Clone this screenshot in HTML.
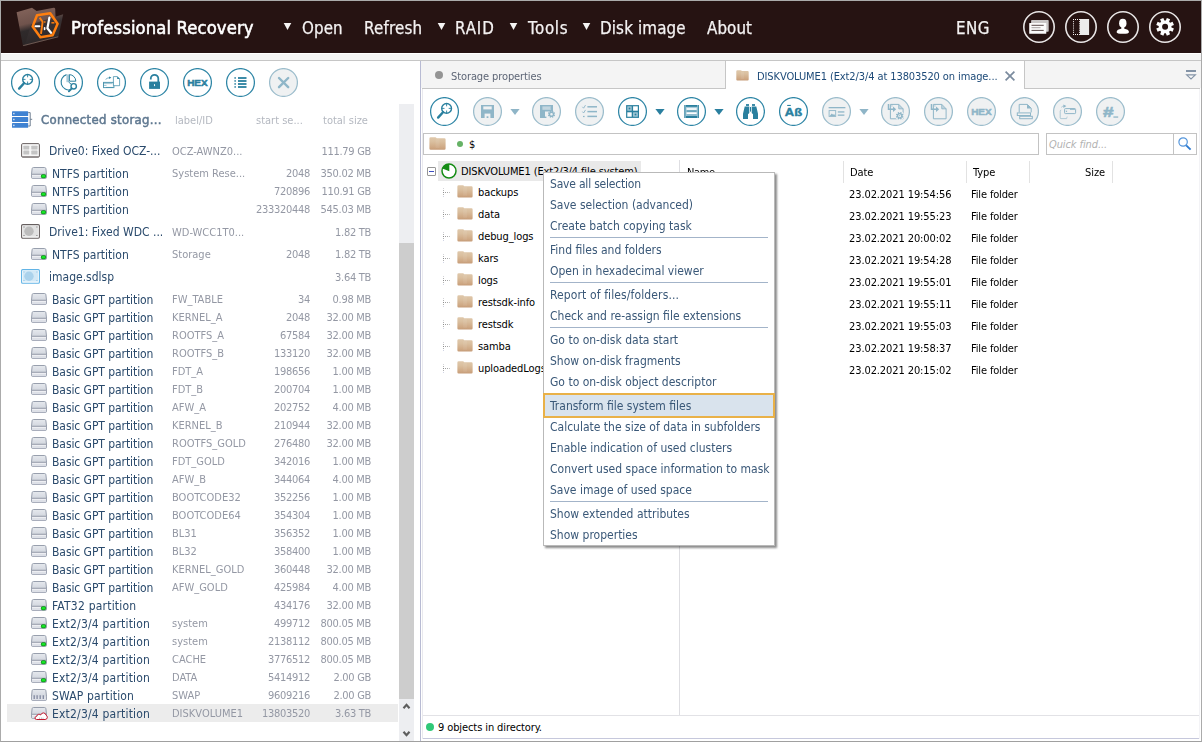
<!DOCTYPE html><html><head><meta charset="utf-8"><title>Professional Recovery</title><style>
*{box-sizing:border-box;margin:0;padding:0}
html,body{width:1202px;height:742px;overflow:hidden;background:#fff}
body{font-family:"DejaVu Sans Condensed", "Liberation Sans", sans-serif;font-size:12px;color:#000;position:relative}
.a{position:absolute;white-space:nowrap}
.row,.fl,.m,.gs{will-change:transform}
#hdr{left:1px;top:1px;width:1200px;height:52px;background:#261312}
.mi{will-change:transform;position:absolute;top:13.7px;height:26px;line-height:26px;font-size:16.8px;color:#f4f2f2;white-space:nowrap;-webkit-text-stroke:0.25px #f4f2f2;letter-spacing:0.1px}
.tri{position:absolute;top:22px;width:0;height:0;border-left:3.8px solid transparent;border-right:3.8px solid transparent;border-top:7.2px solid #f4f2f2}
.dd{position:absolute;width:0;height:0;border-left:4.5px solid transparent;border-right:4.5px solid transparent;border-top:5px solid #2f86a6}
.dd.d{border-top-color:#9fc0d0}
.row{position:absolute;left:0;width:399px;height:18px;line-height:18px;font-size:12px}
.row .n{position:absolute;left:52px;top:1px;color:#2a4a6c}
.row .l{position:absolute;left:172px;top:1px;font-size:11px;color:#9498a4}
.row .s{position:absolute;right:89px;top:1px;font-size:11px;color:#9498a4;text-align:right;letter-spacing:-0.3px}
.row .z{position:absolute;right:28px;top:1px;font-size:11px;color:#9498a4;text-align:right;letter-spacing:-0.3px}
.row.drv .n{left:49px;top:0}
.tr{position:absolute;left:478px;height:22px;line-height:22px;font-size:11px;color:#000;white-space:nowrap;letter-spacing:-0.1px}
.fl{position:absolute;height:22px;line-height:22px;font-size:11px;color:#000;white-space:nowrap;letter-spacing:-0.1px}
.m{position:absolute;left:6px;height:21px;line-height:21px;font-size:12px;color:#3a5878;white-space:nowrap}
.sep{position:absolute;left:6px;width:218px;height:1px;background:#a3b4c9}
.dot{position:absolute;left:443px;width:8px;height:11px}
.vdot{position:absolute;left:443px;width:1px;border-left:1px dotted #a0a0a0}
</style></head><body>
<div class="a" style="left:0;top:0;width:1202px;height:742px;border:1px solid #ababab;border-bottom-color:#a0a0a0"></div>
<div class="a" id="hdr">
<svg width="0" height="0" style="position:absolute"><defs><linearGradient id="pg" x1="0" y1="0" x2="0" y2="1"><stop offset="0" stop-color="#e6e9ee"/><stop offset="0.6" stop-color="#d3d7df"/><stop offset="1" stop-color="#d9dde4"/></linearGradient><linearGradient id="fg" x1="0" y1="0" x2="0" y2="1"><stop offset="0" stop-color="#dfc8ab"/><stop offset="0.35" stop-color="#dabf9f"/><stop offset="0.8" stop-color="#cfa985"/><stop offset="1" stop-color="#c69c78"/></linearGradient></defs></svg><svg class="a" style="left:14px;top:4px" width="52" height="46" viewBox="15 5 52 46"><defs><linearGradient id="lg1" x1="0" y1="0" x2="0.25" y2="1"><stop offset="0" stop-color="#85655c"/><stop offset="0.45" stop-color="#6f534c"/><stop offset="0.62" stop-color="#2f2a2b"/><stop offset="1" stop-color="#2b2526"/></linearGradient><linearGradient id="lg2" x1="0" y1="0" x2="0.2" y2="1"><stop offset="0" stop-color="#7a5d55"/><stop offset="0.35" stop-color="#3a3233"/><stop offset="1" stop-color="#2c2728"/></linearGradient></defs><path d="M16.6 12.2L32 7.8L36.6 11L53.6 7.8Q55 7.6 55.2 9L56.4 36L23 46.2Z" fill="url(#lg1)"/><path d="M31 24.4L63.2 14.2L58.4 37L24.6 46Z" fill="url(#lg2)"/><path d="M23.2 45.6L58.2 36.8" stroke="#7d6259" stroke-width="0.8" fill="none"/><path d="M37 15.2L50.2 13.2L57.6 23.8L52.6 35.2L40.4 37.2L32.6 26.6Z" fill="none" stroke="#ff7f0f" stroke-width="2.5" stroke-linejoin="round"/><path d="M35.4 26.2h4" stroke="#fff" stroke-width="1.9" stroke-linecap="round" fill="none"/><path d="M39.6 17.6L42.6 21.8L41 33.8" stroke="#ff7f0f" stroke-width="1.9" fill="none" stroke-linejoin="round"/><path d="M49.4 17.6L47.4 28.2L51 32.8" stroke="#fff" stroke-width="2.2" fill="none" stroke-linejoin="round" stroke-linecap="round"/><path d="M44.6 27.8v1.6" stroke="#fff" stroke-width="1.6" stroke-linecap="round" fill="none"/><path d="M51.4 22.8h3" stroke="#ff7f0f" stroke-width="1.5" fill="none"/><path d="M44.8 21.2v1.6" stroke="#ff7f0f" stroke-width="1.4" fill="none"/></svg>
<div class="a" style="left:70px;top:14px;height:26px;line-height:26px;font-size:18.3px;color:#fff;-webkit-text-stroke:0.55px #fff;letter-spacing:0.12px;will-change:transform" id="title">Professional Recovery</div>
<svg class="a" style="left:282px;top:21px" width="9" height="9" viewBox="0 0 9 9"><path d="M0.7 1L8.3 1L4.5 8.1Z" fill="#f6f4f4"/></svg>
<div class="mi" style="left:300.7px;letter-spacing:0.1px">Open</div>
<div class="mi" style="left:362.6px;letter-spacing:0.2px">Refresh</div>
<svg class="a" style="left:436px;top:21px" width="9" height="9" viewBox="0 0 9 9"><path d="M0.7 1L8.3 1L4.5 8.1Z" fill="#f6f4f4"/></svg>
<div class="mi" style="left:454.4px;letter-spacing:0.85px">RAID</div>
<svg class="a" style="left:508px;top:21px" width="9" height="9" viewBox="0 0 9 9"><path d="M0.7 1L8.3 1L4.5 8.1Z" fill="#f6f4f4"/></svg>
<div class="mi" style="left:526.5px;letter-spacing:0.65px">Tools</div>
<svg class="a" style="left:581px;top:21px" width="9" height="9" viewBox="0 0 9 9"><path d="M0.7 1L8.3 1L4.5 8.1Z" fill="#f6f4f4"/></svg>
<div class="mi" style="left:599px;letter-spacing:0.15px">Disk image</div>
<div class="mi" style="left:705.6px;letter-spacing:0.1px">About</div>
<div class="mi" style="left:955.3px;letter-spacing:0.5px">ENG</div>
<div class="a" style="left:1022px;top:10px;width:32px;height:32px"><svg viewBox="0 0 32 32" width="32" height="32" style="display:block"><circle cx="16" cy="16" r="15.2" fill="none" stroke="#e9e6e6" stroke-width="1.6"/><rect x="8.1" y="9" width="17.6" height="11.8" rx="0.8" fill="#c9c6c6"/><rect x="6.2" y="12" width="17.1" height="10.8" rx="0.6" fill="#fbfbfb"/><rect x="8.5" y="13.8" width="12.2" height="1" fill="#5a4a4a"/><rect x="8.5" y="16.2" width="9" height="1" fill="#a9a3a3"/><rect x="8.5" y="18.9" width="12.2" height="1" fill="#5a4a4a"/></svg></div>
<div class="a" style="left:1064px;top:10px;width:32px;height:32px"><svg viewBox="0 0 32 32" width="32" height="32" style="display:block"><circle cx="16" cy="16" r="15.2" fill="none" stroke="#e9e6e6" stroke-width="1.6"/><rect x="8" y="8" width="1" height="1" fill="#f6f4f4"/><rect x="10" y="8" width="1" height="1" fill="#f6f4f4"/><rect x="12" y="8" width="1" height="1" fill="#f6f4f4"/><rect x="14" y="8" width="1" height="1" fill="#f6f4f4"/><rect x="8" y="23" width="1" height="1" fill="#f6f4f4"/><rect x="10" y="23" width="1" height="1" fill="#f6f4f4"/><rect x="12" y="23" width="1" height="1" fill="#f6f4f4"/><rect x="14" y="23" width="1" height="1" fill="#f6f4f4"/><rect x="8" y="10.14" width="1" height="1" fill="#f6f4f4"/><rect x="8" y="12.280000000000001" width="1" height="1" fill="#f6f4f4"/><rect x="8" y="14.42" width="1" height="1" fill="#f6f4f4"/><rect x="8" y="16.560000000000002" width="1" height="1" fill="#f6f4f4"/><rect x="8" y="18.700000000000003" width="1" height="1" fill="#f6f4f4"/><rect x="8" y="20.84" width="1" height="1" fill="#f6f4f4"/><rect x="14" y="10.14" width="1" height="1" fill="#f6f4f4"/><rect x="14" y="12.280000000000001" width="1" height="1" fill="#f6f4f4"/><rect x="14" y="14.42" width="1" height="1" fill="#f6f4f4"/><rect x="14" y="16.560000000000002" width="1" height="1" fill="#f6f4f4"/><rect x="14" y="18.700000000000003" width="1" height="1" fill="#f6f4f4"/><rect x="14" y="20.84" width="1" height="1" fill="#f6f4f4"/><rect x="15" y="8" width="9.1" height="16" fill="#ececec"/></svg></div>
<div class="a" style="left:1106px;top:10px;width:32px;height:32px"><svg viewBox="0 0 32 32" width="32" height="32" style="display:block"><circle cx="16" cy="16" r="15.2" fill="none" stroke="#e9e6e6" stroke-width="1.6"/><ellipse cx="15.8" cy="12.2" rx="3.7" ry="4.4" fill="#fff"/><path d="M14.3 15.5h3v2.2q4.3 0.6 4.7 3.2 0.1 1.9-6.2 1.9-6.3 0-6.2-1.9 0.4-2.6 4.7-3.2z" fill="#fff"/></svg></div>
<div class="a" style="left:1148px;top:10px;width:32px;height:32px"><svg viewBox="0 0 32 32" width="32" height="32" style="display:block"><circle cx="16" cy="16" r="15.2" fill="none" stroke="#e9e6e6" stroke-width="1.6"/><path d="M24.93 17.56 L23.58 20.80 L21.13 19.76 L20.06 20.83 L21.10 23.28 L17.86 24.63 L16.85 22.16 L15.35 22.16 L14.34 24.63 L11.10 23.28 L12.14 20.83 L11.07 19.76 L8.62 20.80 L7.27 17.56 L9.74 16.55 L9.74 15.05 L7.27 14.04 L8.62 10.80 L11.07 11.84 L12.14 10.77 L11.10 8.32 L14.34 6.97 L15.35 9.44 L16.85 9.44 L17.86 6.97 L21.10 8.32 L20.06 10.77 L21.13 11.84 L23.58 10.80 L24.93 14.04 L22.46 15.05 L22.46 16.55Z M19.10 15.80 A3 3 0 1 0 13.10 15.80 A3 3 0 1 0 19.10 15.80Z" fill="#fff" fill-rule="evenodd"/></svg></div>
</div>
<div class="a" style="left:1px;top:54px;width:1200px;height:6px;background:#f4f4f4"></div>
<div class="a" style="left:1px;top:60px;width:1200px;height:1px;background:#c6c6c6"></div>
<div class="a" style="left:11.0px;top:68px;width:29px;height:29px"><svg viewBox="0 0 29 29" width="29" height="29" style="display:block"><circle cx="14.5" cy="14.5" r="13.9" fill="#fff" stroke="#2f86a6" stroke-width="1.25"/><circle cx="16.6" cy="11.4" r="4.9" fill="none" stroke="#2a809f" stroke-width="1.4"/><path d="M16.6 6.6v2.7M16.6 13.5v2.7M11.8 11.4h2.7M18.7 11.4h2.7" stroke="#2a809f" stroke-width="0.9" fill="none"/><path d="M13 15.2L8.1 20.6" stroke="#2a809f" stroke-width="2.4" stroke-linecap="round" fill="none"/></svg></div>
<div class="a" style="left:54.0px;top:68px;width:29px;height:29px"><svg viewBox="0 0 29 29" width="29" height="29" style="display:block"><circle cx="14.5" cy="14.5" r="13.9" fill="#fff" stroke="#2f86a6" stroke-width="1.25"/><path d="M12.6 6.6A7.8 7.8 0 1 0 17.2 21.6" fill="none" stroke="#2a809f" stroke-width="1.1"/><rect x="12.4" y="6.4" width="2.6" height="7.8" fill="#a9cbd9"/><path d="M15.4 6.6A6.6 6.6 0 0 1 21.8 13.2L15.4 13.2Z" fill="none" stroke="#2a809f" stroke-width="1"/><path d="M14.6 14L17.6 16.6" stroke="#2a809f" stroke-width="1" fill="none"/><circle cx="19.7" cy="18.3" r="2.7" fill="#fff" stroke="#2a809f" stroke-width="1.4"/><path d="M17.7 20.4L14.9 23.3" stroke="#2a809f" stroke-width="1.9" stroke-linecap="round" fill="none"/></svg></div>
<div class="a" style="left:97.0px;top:68px;width:29px;height:29px"><svg viewBox="0 0 29 29" width="29" height="29" style="display:block"><circle cx="14.5" cy="14.5" r="13.9" fill="#fff" stroke="#2f86a6" stroke-width="1.25"/><rect x="6.5" y="14.4" width="10.4" height="5.2" fill="#fff" stroke="#2a809f" stroke-width="1" stroke-opacity="0.8"/><path d="M6.5 15.6h9M6.5 17.4h3M9 19.4h7" stroke="#2a809f" stroke-width="1" stroke-opacity="0.45" fill="none"/><path d="M16.4 8.6h4l2.2 2.2v6.9h-6.2z" fill="#fff" stroke="#2a809f" stroke-width="0.9" stroke-opacity="0.75"/><path d="M20.2 8.4l2.6 2.6h-2.6z" fill="#2a809f"/><path d="M8.6 11.4Q10.2 9.9 12.4 9.7" stroke="#2a809f" stroke-width="0.9" stroke-opacity="0.7" fill="none"/><path d="M12 8.4l2.4 1.2-2.2 1.4z" fill="#2a809f"/></svg></div>
<div class="a" style="left:140.0px;top:68px;width:29px;height:29px"><svg viewBox="0 0 29 29" width="29" height="29" style="display:block"><circle cx="14.5" cy="14.5" r="13.9" fill="#fff" stroke="#2f86a6" stroke-width="1.25"/><rect x="9.1" y="13.6" width="10.9" height="7.3" fill="#2a809f"/><path d="M10.8 11.6V10.6A3.75 3.75 0 0 1 18.3 10.6V14" fill="none" stroke="#2a809f" stroke-width="1.75"/><ellipse cx="14.55" cy="17.1" rx="0.55" ry="1.2" fill="#fff"/></svg></div>
<div class="a" style="left:183.0px;top:68px;width:29px;height:29px"><svg viewBox="0 0 29 29" width="29" height="29" style="display:block"><circle cx="14.5" cy="14.5" r="13.9" fill="#fff" stroke="#2f86a6" stroke-width="1.25"/><text x="14.45" y="18" text-anchor="middle" font-family="'Liberation Sans','DejaVu Sans',sans-serif" font-weight="bold" font-size="9.8" textLength="20.6" lengthAdjust="spacingAndGlyphs" fill="#2a809f" stroke="#2a809f" stroke-width="0.5">HEX</text></svg></div>
<div class="a" style="left:226.0px;top:68px;width:29px;height:29px"><svg viewBox="0 0 29 29" width="29" height="29" style="display:block"><circle cx="14.5" cy="14.5" r="13.9" fill="#fff" stroke="#2f86a6" stroke-width="1.25"/><rect x="8.3" y="9.1" width="1.7" height="1.7" fill="#2a809f" fill-opacity="0.8"/><rect x="12" y="9.1" width="8.5" height="1.8" fill="#2a809f"/><rect x="8.3" y="12.1" width="1.7" height="1.7" fill="#2a809f" fill-opacity="0.8"/><rect x="12" y="12.1" width="8.5" height="1.8" fill="#2a809f"/><rect x="8.3" y="15.1" width="1.7" height="1.7" fill="#2a809f" fill-opacity="0.8"/><rect x="12" y="15.1" width="8.5" height="1.8" fill="#2a809f"/><rect x="8.3" y="18.1" width="1.7" height="1.7" fill="#2a809f" fill-opacity="0.8"/><rect x="12" y="18.1" width="8.5" height="1.8" fill="#2a809f"/></svg></div>
<div class="a" style="left:269.0px;top:68px;width:29px;height:29px"><svg viewBox="0 0 29 29" width="29" height="29" style="display:block"><circle cx="14.5" cy="14.5" r="13.9" fill="#eff1f2" stroke="#9cbdcc" stroke-width="1.25"/><path d="M10 10L19.2 19.2M19.2 10L10 19.2" stroke="#8fb6c8" stroke-width="2.4" stroke-linecap="round" fill="none"/></svg></div>
<svg class="a" style="left:12px;top:111px" width="21" height="17" viewBox="0 0 21 17"><rect x="0" y="0.2" width="16.2" height="4.8" rx="0.6" fill="#3f82d2"/><rect x="1.2" y="1.9" width="1.3" height="1.4" fill="#e8f0fa"/><rect x="0" y="6.1" width="16.2" height="4.8" rx="0.6" fill="#3f82d2"/><rect x="1.2" y="7.8" width="1.3" height="1.4" fill="#e8f0fa"/><rect x="0" y="12" width="16.2" height="4.8" rx="0.6" fill="#3f82d2"/><rect x="1.2" y="13.7" width="1.3" height="1.4" fill="#e8f0fa"/><path d="M16.2 1.6h2v13.4h-2M18.2 8.3h2" stroke="#6f7f92" stroke-width="1" fill="none"/></svg>
<div class="a gs" style="left:40.5px;top:111px;height:18px;line-height:18px;font-size:13px;color:#5f7890;-webkit-text-stroke:0.5px #5f7890;letter-spacing:0.3px">Connected storag...</div>
<div class="a gs" style="left:175px;top:112px;height:18px;line-height:18px;font-size:11px;color:#b4b8c0">label/ID</div>
<div class="a gs" style="left:256px;top:112px;height:18px;line-height:18px;font-size:11px;color:#b4b8c0">start se...</div>
<div class="a gs" style="left:323px;top:112px;height:18px;line-height:18px;font-size:11px;color:#b4b8c0">total size</div>
<div class="a" style="left:7px;top:704px;width:391px;height:18px;background:#ececec"></div>
<div class="row drv" style="top:142px"><svg class="a" style="left:21px;top:1px" width="19" height="15" viewBox="0 0 19 15"><rect x="0.6" y="0.6" width="17.8" height="13.6" rx="1.2" fill="#f6f6f6" stroke="#6a6363" stroke-width="1"/><rect x="2.4" y="2.7" width="5.8" height="3.9" rx="0.6" fill="#c4c4c4"/><rect x="10.3" y="2.7" width="6.2" height="3.9" rx="0.6" fill="#c4c4c4"/><rect x="2.4" y="7.6" width="5.8" height="3.9" rx="0.6" fill="#c4c4c4"/><rect x="10.3" y="7.6" width="6.2" height="3.9" rx="0.6" fill="#c4c4c4"/><rect x="1" y="13.2" width="17" height="1" fill="#8c8686"/></svg><span class="n">Drive0: Fixed OCZ-...</span><span class="l">OCZ-AWNZ0...</span><span class="s"></span><span class="z">111.79 GB</span></div>
<div class="row" style="top:164px"><svg class="a" style="left:31px;top:3px;overflow:visible" width="16" height="12" viewBox="0 0 16 12"><path d="M2.5 0.5h11q1.2 0 1.4 1.2l0.6 5.5v3q0 1.3-1.3 1.3h-12.4q-1.3 0-1.3-1.3v-3l0.6-5.5q0.2-1.2 1.4-1.2z" fill="url(#pg)" stroke="#8d95a5" stroke-width="0.9"/><path d="M0.9 7.7h14.2v2.5q0 1-1 1h-12.2q-1 0-1-1z" fill="#dde0e7"/><path d="M0.8 7.3h14.4" stroke="#7f8797" stroke-width="0.9" fill="none"/><path d="M1 8.3h14" stroke="#f7f8fa" stroke-width="0.8" fill="none"/><rect x="9.9" y="7.2" width="5.2" height="4" rx="1.7" fill="#0a8c16"/><rect x="10.6" y="7.9" width="3.8" height="2.6" rx="1.3" fill="#16e626"/></svg><span class="n">NTFS partition</span><span class="l">System Rese...</span><span class="s">2048</span><span class="z">350.02 MB</span></div>
<div class="row" style="top:182px"><svg class="a" style="left:31px;top:3px;overflow:visible" width="16" height="12" viewBox="0 0 16 12"><path d="M2.5 0.5h11q1.2 0 1.4 1.2l0.6 5.5v3q0 1.3-1.3 1.3h-12.4q-1.3 0-1.3-1.3v-3l0.6-5.5q0.2-1.2 1.4-1.2z" fill="url(#pg)" stroke="#8d95a5" stroke-width="0.9"/><path d="M0.9 7.7h14.2v2.5q0 1-1 1h-12.2q-1 0-1-1z" fill="#dde0e7"/><path d="M0.8 7.3h14.4" stroke="#7f8797" stroke-width="0.9" fill="none"/><path d="M1 8.3h14" stroke="#f7f8fa" stroke-width="0.8" fill="none"/><rect x="9.9" y="7.2" width="5.2" height="4" rx="1.7" fill="#0a8c16"/><rect x="10.6" y="7.9" width="3.8" height="2.6" rx="1.3" fill="#16e626"/></svg><span class="n">NTFS partition</span><span class="l"></span><span class="s">720896</span><span class="z">110.91 GB</span></div>
<div class="row" style="top:200px"><svg class="a" style="left:31px;top:3px;overflow:visible" width="16" height="12" viewBox="0 0 16 12"><path d="M2.5 0.5h11q1.2 0 1.4 1.2l0.6 5.5v3q0 1.3-1.3 1.3h-12.4q-1.3 0-1.3-1.3v-3l0.6-5.5q0.2-1.2 1.4-1.2z" fill="url(#pg)" stroke="#8d95a5" stroke-width="0.9"/><path d="M0.9 7.7h14.2v2.5q0 1-1 1h-12.2q-1 0-1-1z" fill="#dde0e7"/><path d="M0.8 7.3h14.4" stroke="#7f8797" stroke-width="0.9" fill="none"/><path d="M1 8.3h14" stroke="#f7f8fa" stroke-width="0.8" fill="none"/><rect x="9.9" y="7.2" width="5.2" height="4" rx="1.7" fill="#0a8c16"/><rect x="10.6" y="7.9" width="3.8" height="2.6" rx="1.3" fill="#16e626"/></svg><span class="n">NTFS partition</span><span class="l"></span><span class="s">233320448</span><span class="z">545.03 MB</span></div>
<div class="row drv" style="top:223px"><svg class="a" style="left:21px;top:1px" width="19" height="15" viewBox="0 0 19 15"><rect x="0.6" y="0.6" width="17.8" height="13.6" rx="1.2" fill="#fff" stroke="#665f5f" stroke-width="1.1"/><rect x="2" y="2" width="15" height="10.6" fill="#e1e1e1"/><circle cx="8" cy="7.2" r="4.7" fill="#bcbcbc"/><rect x="2.5" y="2.5" width="1" height="1" fill="#777"/><rect x="15.4" y="2.5" width="1" height="1" fill="#777"/><rect x="2.5" y="11" width="1" height="1" fill="#777"/><rect x="15.4" y="11" width="1" height="1" fill="#777"/></svg><span class="n">Drive1: Fixed WDC ...</span><span class="l">WD-WCC1T0...</span><span class="s"></span><span class="z">1.82 TB</span></div>
<div class="row" style="top:245px"><svg class="a" style="left:31px;top:3px;overflow:visible" width="16" height="12" viewBox="0 0 16 12"><path d="M2.5 0.5h11q1.2 0 1.4 1.2l0.6 5.5v3q0 1.3-1.3 1.3h-12.4q-1.3 0-1.3-1.3v-3l0.6-5.5q0.2-1.2 1.4-1.2z" fill="url(#pg)" stroke="#8d95a5" stroke-width="0.9"/><path d="M0.9 7.7h14.2v2.5q0 1-1 1h-12.2q-1 0-1-1z" fill="#dde0e7"/><path d="M0.8 7.3h14.4" stroke="#7f8797" stroke-width="0.9" fill="none"/><path d="M1 8.3h14" stroke="#f7f8fa" stroke-width="0.8" fill="none"/><rect x="9.9" y="7.2" width="5.2" height="4" rx="1.7" fill="#0a8c16"/><rect x="10.6" y="7.9" width="3.8" height="2.6" rx="1.3" fill="#16e626"/></svg><span class="n">NTFS partition</span><span class="l">Storage</span><span class="s">2048</span><span class="z">1.82 TB</span></div>
<div class="row drv" style="top:268px"><svg class="a" style="left:21px;top:0.6px" width="19" height="15" viewBox="0 0 19 15"><rect x="0.6" y="0.6" width="17.8" height="13.6" rx="1" fill="#fff" stroke="#62b4e6" stroke-width="1.1"/><rect x="2" y="2" width="15" height="10.6" fill="#d2e8f6"/><circle cx="8" cy="7.2" r="4.7" fill="#aad2ec"/><rect x="2.5" y="2.5" width="1" height="1" fill="#8cc4e8"/><rect x="15.4" y="2.5" width="1" height="1" fill="#8cc4e8"/><rect x="2.5" y="11" width="1" height="1" fill="#8cc4e8"/><rect x="15.4" y="11" width="1" height="1" fill="#8cc4e8"/></svg><span class="n">image.sdlsp</span><span class="l"></span><span class="s"></span><span class="z">3.64 TB</span></div>
<div class="row" style="top:290px"><svg class="a" style="left:31px;top:3px;overflow:visible" width="16" height="12" viewBox="0 0 16 12"><path d="M2.5 0.5h11q1.2 0 1.4 1.2l0.6 5.5v3q0 1.3-1.3 1.3h-12.4q-1.3 0-1.3-1.3v-3l0.6-5.5q0.2-1.2 1.4-1.2z" fill="url(#pg)" stroke="#8d95a5" stroke-width="0.9"/><path d="M0.9 7.7h14.2v2.5q0 1-1 1h-12.2q-1 0-1-1z" fill="#dde0e7"/><path d="M0.8 7.3h14.4" stroke="#7f8797" stroke-width="0.9" fill="none"/><path d="M1 8.3h14" stroke="#f7f8fa" stroke-width="0.8" fill="none"/></svg><span class="n" style="letter-spacing:-0.07px">Basic GPT partition</span><span class="l">FW_TABLE</span><span class="s">34</span><span class="z">0.98 MB</span></div>
<div class="row" style="top:308px"><svg class="a" style="left:31px;top:3px;overflow:visible" width="16" height="12" viewBox="0 0 16 12"><path d="M2.5 0.5h11q1.2 0 1.4 1.2l0.6 5.5v3q0 1.3-1.3 1.3h-12.4q-1.3 0-1.3-1.3v-3l0.6-5.5q0.2-1.2 1.4-1.2z" fill="url(#pg)" stroke="#8d95a5" stroke-width="0.9"/><path d="M0.9 7.7h14.2v2.5q0 1-1 1h-12.2q-1 0-1-1z" fill="#dde0e7"/><path d="M0.8 7.3h14.4" stroke="#7f8797" stroke-width="0.9" fill="none"/><path d="M1 8.3h14" stroke="#f7f8fa" stroke-width="0.8" fill="none"/></svg><span class="n" style="letter-spacing:-0.07px">Basic GPT partition</span><span class="l">KERNEL_A</span><span class="s">2048</span><span class="z">32.00 MB</span></div>
<div class="row" style="top:326px"><svg class="a" style="left:31px;top:3px;overflow:visible" width="16" height="12" viewBox="0 0 16 12"><path d="M2.5 0.5h11q1.2 0 1.4 1.2l0.6 5.5v3q0 1.3-1.3 1.3h-12.4q-1.3 0-1.3-1.3v-3l0.6-5.5q0.2-1.2 1.4-1.2z" fill="url(#pg)" stroke="#8d95a5" stroke-width="0.9"/><path d="M0.9 7.7h14.2v2.5q0 1-1 1h-12.2q-1 0-1-1z" fill="#dde0e7"/><path d="M0.8 7.3h14.4" stroke="#7f8797" stroke-width="0.9" fill="none"/><path d="M1 8.3h14" stroke="#f7f8fa" stroke-width="0.8" fill="none"/></svg><span class="n" style="letter-spacing:-0.07px">Basic GPT partition</span><span class="l">ROOTFS_A</span><span class="s">67584</span><span class="z">32.00 MB</span></div>
<div class="row" style="top:344px"><svg class="a" style="left:31px;top:3px;overflow:visible" width="16" height="12" viewBox="0 0 16 12"><path d="M2.5 0.5h11q1.2 0 1.4 1.2l0.6 5.5v3q0 1.3-1.3 1.3h-12.4q-1.3 0-1.3-1.3v-3l0.6-5.5q0.2-1.2 1.4-1.2z" fill="url(#pg)" stroke="#8d95a5" stroke-width="0.9"/><path d="M0.9 7.7h14.2v2.5q0 1-1 1h-12.2q-1 0-1-1z" fill="#dde0e7"/><path d="M0.8 7.3h14.4" stroke="#7f8797" stroke-width="0.9" fill="none"/><path d="M1 8.3h14" stroke="#f7f8fa" stroke-width="0.8" fill="none"/></svg><span class="n" style="letter-spacing:-0.07px">Basic GPT partition</span><span class="l">ROOTFS_B</span><span class="s">133120</span><span class="z">32.00 MB</span></div>
<div class="row" style="top:362px"><svg class="a" style="left:31px;top:3px;overflow:visible" width="16" height="12" viewBox="0 0 16 12"><path d="M2.5 0.5h11q1.2 0 1.4 1.2l0.6 5.5v3q0 1.3-1.3 1.3h-12.4q-1.3 0-1.3-1.3v-3l0.6-5.5q0.2-1.2 1.4-1.2z" fill="url(#pg)" stroke="#8d95a5" stroke-width="0.9"/><path d="M0.9 7.7h14.2v2.5q0 1-1 1h-12.2q-1 0-1-1z" fill="#dde0e7"/><path d="M0.8 7.3h14.4" stroke="#7f8797" stroke-width="0.9" fill="none"/><path d="M1 8.3h14" stroke="#f7f8fa" stroke-width="0.8" fill="none"/></svg><span class="n" style="letter-spacing:-0.07px">Basic GPT partition</span><span class="l">FDT_A</span><span class="s">198656</span><span class="z">1.00 MB</span></div>
<div class="row" style="top:380px"><svg class="a" style="left:31px;top:3px;overflow:visible" width="16" height="12" viewBox="0 0 16 12"><path d="M2.5 0.5h11q1.2 0 1.4 1.2l0.6 5.5v3q0 1.3-1.3 1.3h-12.4q-1.3 0-1.3-1.3v-3l0.6-5.5q0.2-1.2 1.4-1.2z" fill="url(#pg)" stroke="#8d95a5" stroke-width="0.9"/><path d="M0.9 7.7h14.2v2.5q0 1-1 1h-12.2q-1 0-1-1z" fill="#dde0e7"/><path d="M0.8 7.3h14.4" stroke="#7f8797" stroke-width="0.9" fill="none"/><path d="M1 8.3h14" stroke="#f7f8fa" stroke-width="0.8" fill="none"/></svg><span class="n" style="letter-spacing:-0.07px">Basic GPT partition</span><span class="l">FDT_B</span><span class="s">200704</span><span class="z">1.00 MB</span></div>
<div class="row" style="top:398px"><svg class="a" style="left:31px;top:3px;overflow:visible" width="16" height="12" viewBox="0 0 16 12"><path d="M2.5 0.5h11q1.2 0 1.4 1.2l0.6 5.5v3q0 1.3-1.3 1.3h-12.4q-1.3 0-1.3-1.3v-3l0.6-5.5q0.2-1.2 1.4-1.2z" fill="url(#pg)" stroke="#8d95a5" stroke-width="0.9"/><path d="M0.9 7.7h14.2v2.5q0 1-1 1h-12.2q-1 0-1-1z" fill="#dde0e7"/><path d="M0.8 7.3h14.4" stroke="#7f8797" stroke-width="0.9" fill="none"/><path d="M1 8.3h14" stroke="#f7f8fa" stroke-width="0.8" fill="none"/></svg><span class="n" style="letter-spacing:-0.07px">Basic GPT partition</span><span class="l">AFW_A</span><span class="s">202752</span><span class="z">4.00 MB</span></div>
<div class="row" style="top:416px"><svg class="a" style="left:31px;top:3px;overflow:visible" width="16" height="12" viewBox="0 0 16 12"><path d="M2.5 0.5h11q1.2 0 1.4 1.2l0.6 5.5v3q0 1.3-1.3 1.3h-12.4q-1.3 0-1.3-1.3v-3l0.6-5.5q0.2-1.2 1.4-1.2z" fill="url(#pg)" stroke="#8d95a5" stroke-width="0.9"/><path d="M0.9 7.7h14.2v2.5q0 1-1 1h-12.2q-1 0-1-1z" fill="#dde0e7"/><path d="M0.8 7.3h14.4" stroke="#7f8797" stroke-width="0.9" fill="none"/><path d="M1 8.3h14" stroke="#f7f8fa" stroke-width="0.8" fill="none"/></svg><span class="n" style="letter-spacing:-0.07px">Basic GPT partition</span><span class="l">KERNEL_B</span><span class="s">210944</span><span class="z">32.00 MB</span></div>
<div class="row" style="top:434px"><svg class="a" style="left:31px;top:3px;overflow:visible" width="16" height="12" viewBox="0 0 16 12"><path d="M2.5 0.5h11q1.2 0 1.4 1.2l0.6 5.5v3q0 1.3-1.3 1.3h-12.4q-1.3 0-1.3-1.3v-3l0.6-5.5q0.2-1.2 1.4-1.2z" fill="url(#pg)" stroke="#8d95a5" stroke-width="0.9"/><path d="M0.9 7.7h14.2v2.5q0 1-1 1h-12.2q-1 0-1-1z" fill="#dde0e7"/><path d="M0.8 7.3h14.4" stroke="#7f8797" stroke-width="0.9" fill="none"/><path d="M1 8.3h14" stroke="#f7f8fa" stroke-width="0.8" fill="none"/></svg><span class="n" style="letter-spacing:-0.07px">Basic GPT partition</span><span class="l">ROOTFS_GOLD</span><span class="s">276480</span><span class="z">32.00 MB</span></div>
<div class="row" style="top:452px"><svg class="a" style="left:31px;top:3px;overflow:visible" width="16" height="12" viewBox="0 0 16 12"><path d="M2.5 0.5h11q1.2 0 1.4 1.2l0.6 5.5v3q0 1.3-1.3 1.3h-12.4q-1.3 0-1.3-1.3v-3l0.6-5.5q0.2-1.2 1.4-1.2z" fill="url(#pg)" stroke="#8d95a5" stroke-width="0.9"/><path d="M0.9 7.7h14.2v2.5q0 1-1 1h-12.2q-1 0-1-1z" fill="#dde0e7"/><path d="M0.8 7.3h14.4" stroke="#7f8797" stroke-width="0.9" fill="none"/><path d="M1 8.3h14" stroke="#f7f8fa" stroke-width="0.8" fill="none"/></svg><span class="n" style="letter-spacing:-0.07px">Basic GPT partition</span><span class="l">FDT_GOLD</span><span class="s">342016</span><span class="z">1.00 MB</span></div>
<div class="row" style="top:470px"><svg class="a" style="left:31px;top:3px;overflow:visible" width="16" height="12" viewBox="0 0 16 12"><path d="M2.5 0.5h11q1.2 0 1.4 1.2l0.6 5.5v3q0 1.3-1.3 1.3h-12.4q-1.3 0-1.3-1.3v-3l0.6-5.5q0.2-1.2 1.4-1.2z" fill="url(#pg)" stroke="#8d95a5" stroke-width="0.9"/><path d="M0.9 7.7h14.2v2.5q0 1-1 1h-12.2q-1 0-1-1z" fill="#dde0e7"/><path d="M0.8 7.3h14.4" stroke="#7f8797" stroke-width="0.9" fill="none"/><path d="M1 8.3h14" stroke="#f7f8fa" stroke-width="0.8" fill="none"/></svg><span class="n" style="letter-spacing:-0.07px">Basic GPT partition</span><span class="l">AFW_B</span><span class="s">344064</span><span class="z">4.00 MB</span></div>
<div class="row" style="top:488px"><svg class="a" style="left:31px;top:3px;overflow:visible" width="16" height="12" viewBox="0 0 16 12"><path d="M2.5 0.5h11q1.2 0 1.4 1.2l0.6 5.5v3q0 1.3-1.3 1.3h-12.4q-1.3 0-1.3-1.3v-3l0.6-5.5q0.2-1.2 1.4-1.2z" fill="url(#pg)" stroke="#8d95a5" stroke-width="0.9"/><path d="M0.9 7.7h14.2v2.5q0 1-1 1h-12.2q-1 0-1-1z" fill="#dde0e7"/><path d="M0.8 7.3h14.4" stroke="#7f8797" stroke-width="0.9" fill="none"/><path d="M1 8.3h14" stroke="#f7f8fa" stroke-width="0.8" fill="none"/></svg><span class="n" style="letter-spacing:-0.07px">Basic GPT partition</span><span class="l">BOOTCODE32</span><span class="s">352256</span><span class="z">1.00 MB</span></div>
<div class="row" style="top:506px"><svg class="a" style="left:31px;top:3px;overflow:visible" width="16" height="12" viewBox="0 0 16 12"><path d="M2.5 0.5h11q1.2 0 1.4 1.2l0.6 5.5v3q0 1.3-1.3 1.3h-12.4q-1.3 0-1.3-1.3v-3l0.6-5.5q0.2-1.2 1.4-1.2z" fill="url(#pg)" stroke="#8d95a5" stroke-width="0.9"/><path d="M0.9 7.7h14.2v2.5q0 1-1 1h-12.2q-1 0-1-1z" fill="#dde0e7"/><path d="M0.8 7.3h14.4" stroke="#7f8797" stroke-width="0.9" fill="none"/><path d="M1 8.3h14" stroke="#f7f8fa" stroke-width="0.8" fill="none"/></svg><span class="n" style="letter-spacing:-0.07px">Basic GPT partition</span><span class="l">BOOTCODE64</span><span class="s">354304</span><span class="z">1.00 MB</span></div>
<div class="row" style="top:524px"><svg class="a" style="left:31px;top:3px;overflow:visible" width="16" height="12" viewBox="0 0 16 12"><path d="M2.5 0.5h11q1.2 0 1.4 1.2l0.6 5.5v3q0 1.3-1.3 1.3h-12.4q-1.3 0-1.3-1.3v-3l0.6-5.5q0.2-1.2 1.4-1.2z" fill="url(#pg)" stroke="#8d95a5" stroke-width="0.9"/><path d="M0.9 7.7h14.2v2.5q0 1-1 1h-12.2q-1 0-1-1z" fill="#dde0e7"/><path d="M0.8 7.3h14.4" stroke="#7f8797" stroke-width="0.9" fill="none"/><path d="M1 8.3h14" stroke="#f7f8fa" stroke-width="0.8" fill="none"/></svg><span class="n" style="letter-spacing:-0.07px">Basic GPT partition</span><span class="l">BL31</span><span class="s">356352</span><span class="z">1.00 MB</span></div>
<div class="row" style="top:542px"><svg class="a" style="left:31px;top:3px;overflow:visible" width="16" height="12" viewBox="0 0 16 12"><path d="M2.5 0.5h11q1.2 0 1.4 1.2l0.6 5.5v3q0 1.3-1.3 1.3h-12.4q-1.3 0-1.3-1.3v-3l0.6-5.5q0.2-1.2 1.4-1.2z" fill="url(#pg)" stroke="#8d95a5" stroke-width="0.9"/><path d="M0.9 7.7h14.2v2.5q0 1-1 1h-12.2q-1 0-1-1z" fill="#dde0e7"/><path d="M0.8 7.3h14.4" stroke="#7f8797" stroke-width="0.9" fill="none"/><path d="M1 8.3h14" stroke="#f7f8fa" stroke-width="0.8" fill="none"/></svg><span class="n" style="letter-spacing:-0.07px">Basic GPT partition</span><span class="l">BL32</span><span class="s">358400</span><span class="z">1.00 MB</span></div>
<div class="row" style="top:560px"><svg class="a" style="left:31px;top:3px;overflow:visible" width="16" height="12" viewBox="0 0 16 12"><path d="M2.5 0.5h11q1.2 0 1.4 1.2l0.6 5.5v3q0 1.3-1.3 1.3h-12.4q-1.3 0-1.3-1.3v-3l0.6-5.5q0.2-1.2 1.4-1.2z" fill="url(#pg)" stroke="#8d95a5" stroke-width="0.9"/><path d="M0.9 7.7h14.2v2.5q0 1-1 1h-12.2q-1 0-1-1z" fill="#dde0e7"/><path d="M0.8 7.3h14.4" stroke="#7f8797" stroke-width="0.9" fill="none"/><path d="M1 8.3h14" stroke="#f7f8fa" stroke-width="0.8" fill="none"/></svg><span class="n" style="letter-spacing:-0.07px">Basic GPT partition</span><span class="l">KERNEL_GOLD</span><span class="s">360448</span><span class="z">32.00 MB</span></div>
<div class="row" style="top:578px"><svg class="a" style="left:31px;top:3px;overflow:visible" width="16" height="12" viewBox="0 0 16 12"><path d="M2.5 0.5h11q1.2 0 1.4 1.2l0.6 5.5v3q0 1.3-1.3 1.3h-12.4q-1.3 0-1.3-1.3v-3l0.6-5.5q0.2-1.2 1.4-1.2z" fill="url(#pg)" stroke="#8d95a5" stroke-width="0.9"/><path d="M0.9 7.7h14.2v2.5q0 1-1 1h-12.2q-1 0-1-1z" fill="#dde0e7"/><path d="M0.8 7.3h14.4" stroke="#7f8797" stroke-width="0.9" fill="none"/><path d="M1 8.3h14" stroke="#f7f8fa" stroke-width="0.8" fill="none"/></svg><span class="n" style="letter-spacing:-0.07px">Basic GPT partition</span><span class="l">AFW_GOLD</span><span class="s">425984</span><span class="z">4.00 MB</span></div>
<div class="row" style="top:596px"><svg class="a" style="left:31px;top:3px;overflow:visible" width="16" height="12" viewBox="0 0 16 12"><path d="M2.5 0.5h11q1.2 0 1.4 1.2l0.6 5.5v3q0 1.3-1.3 1.3h-12.4q-1.3 0-1.3-1.3v-3l0.6-5.5q0.2-1.2 1.4-1.2z" fill="url(#pg)" stroke="#8d95a5" stroke-width="0.9"/><path d="M0.9 7.7h14.2v2.5q0 1-1 1h-12.2q-1 0-1-1z" fill="#dde0e7"/><path d="M0.8 7.3h14.4" stroke="#7f8797" stroke-width="0.9" fill="none"/><path d="M1 8.3h14" stroke="#f7f8fa" stroke-width="0.8" fill="none"/><rect x="9.9" y="7.2" width="5.2" height="4" rx="1.7" fill="#0a8c16"/><rect x="10.6" y="7.9" width="3.8" height="2.6" rx="1.3" fill="#16e626"/></svg><span class="n" style="letter-spacing:0.22px">FAT32 partition</span><span class="l"></span><span class="s">434176</span><span class="z">32.00 MB</span></div>
<div class="row" style="top:614px"><svg class="a" style="left:31px;top:3px;overflow:visible" width="16" height="12" viewBox="0 0 16 12"><path d="M2.5 0.5h11q1.2 0 1.4 1.2l0.6 5.5v3q0 1.3-1.3 1.3h-12.4q-1.3 0-1.3-1.3v-3l0.6-5.5q0.2-1.2 1.4-1.2z" fill="url(#pg)" stroke="#8d95a5" stroke-width="0.9"/><path d="M0.9 7.7h14.2v2.5q0 1-1 1h-12.2q-1 0-1-1z" fill="#dde0e7"/><path d="M0.8 7.3h14.4" stroke="#7f8797" stroke-width="0.9" fill="none"/><path d="M1 8.3h14" stroke="#f7f8fa" stroke-width="0.8" fill="none"/><rect x="9.9" y="7.2" width="5.2" height="4" rx="1.7" fill="#0a8c16"/><rect x="10.6" y="7.9" width="3.8" height="2.6" rx="1.3" fill="#16e626"/></svg><span class="n" style="letter-spacing:0.2px">Ext2/3/4 partition</span><span class="l">system</span><span class="s">499712</span><span class="z">800.05 MB</span></div>
<div class="row" style="top:632px"><svg class="a" style="left:31px;top:3px;overflow:visible" width="16" height="12" viewBox="0 0 16 12"><path d="M2.5 0.5h11q1.2 0 1.4 1.2l0.6 5.5v3q0 1.3-1.3 1.3h-12.4q-1.3 0-1.3-1.3v-3l0.6-5.5q0.2-1.2 1.4-1.2z" fill="url(#pg)" stroke="#8d95a5" stroke-width="0.9"/><path d="M0.9 7.7h14.2v2.5q0 1-1 1h-12.2q-1 0-1-1z" fill="#dde0e7"/><path d="M0.8 7.3h14.4" stroke="#7f8797" stroke-width="0.9" fill="none"/><path d="M1 8.3h14" stroke="#f7f8fa" stroke-width="0.8" fill="none"/><rect x="9.9" y="7.2" width="5.2" height="4" rx="1.7" fill="#0a8c16"/><rect x="10.6" y="7.9" width="3.8" height="2.6" rx="1.3" fill="#16e626"/></svg><span class="n" style="letter-spacing:0.2px">Ext2/3/4 partition</span><span class="l">system</span><span class="s">2138112</span><span class="z">800.05 MB</span></div>
<div class="row" style="top:650px"><svg class="a" style="left:31px;top:3px;overflow:visible" width="16" height="12" viewBox="0 0 16 12"><path d="M2.5 0.5h11q1.2 0 1.4 1.2l0.6 5.5v3q0 1.3-1.3 1.3h-12.4q-1.3 0-1.3-1.3v-3l0.6-5.5q0.2-1.2 1.4-1.2z" fill="url(#pg)" stroke="#8d95a5" stroke-width="0.9"/><path d="M0.9 7.7h14.2v2.5q0 1-1 1h-12.2q-1 0-1-1z" fill="#dde0e7"/><path d="M0.8 7.3h14.4" stroke="#7f8797" stroke-width="0.9" fill="none"/><path d="M1 8.3h14" stroke="#f7f8fa" stroke-width="0.8" fill="none"/><rect x="9.9" y="7.2" width="5.2" height="4" rx="1.7" fill="#0a8c16"/><rect x="10.6" y="7.9" width="3.8" height="2.6" rx="1.3" fill="#16e626"/></svg><span class="n" style="letter-spacing:0.2px">Ext2/3/4 partition</span><span class="l">CACHE</span><span class="s">3776512</span><span class="z">800.05 MB</span></div>
<div class="row" style="top:668px"><svg class="a" style="left:31px;top:3px;overflow:visible" width="16" height="12" viewBox="0 0 16 12"><path d="M2.5 0.5h11q1.2 0 1.4 1.2l0.6 5.5v3q0 1.3-1.3 1.3h-12.4q-1.3 0-1.3-1.3v-3l0.6-5.5q0.2-1.2 1.4-1.2z" fill="url(#pg)" stroke="#8d95a5" stroke-width="0.9"/><path d="M0.9 7.7h14.2v2.5q0 1-1 1h-12.2q-1 0-1-1z" fill="#dde0e7"/><path d="M0.8 7.3h14.4" stroke="#7f8797" stroke-width="0.9" fill="none"/><path d="M1 8.3h14" stroke="#f7f8fa" stroke-width="0.8" fill="none"/><rect x="9.9" y="7.2" width="5.2" height="4" rx="1.7" fill="#0a8c16"/><rect x="10.6" y="7.9" width="3.8" height="2.6" rx="1.3" fill="#16e626"/></svg><span class="n" style="letter-spacing:0.2px">Ext2/3/4 partition</span><span class="l">DATA</span><span class="s">5414912</span><span class="z">2.00 GB</span></div>
<div class="row" style="top:686px"><svg class="a" style="left:31px;top:3px;overflow:visible" width="16" height="12" viewBox="0 0 16 12"><path d="M2.5 0.5h11q1.2 0 1.4 1.2l0.6 5.5v3q0 1.3-1.3 1.3h-12.4q-1.3 0-1.3-1.3v-3l0.6-5.5q0.2-1.2 1.4-1.2z" fill="url(#pg)" stroke="#8d95a5" stroke-width="0.9"/><path d="M0.9 7.7h14.2v2.5q0 1-1 1h-12.2q-1 0-1-1z" fill="#dde0e7"/><path d="M3.2 6.2v3.7M6.1 6.2v3.7M9.2 6.2v3.7M12.3 6.2v3.7" stroke="#8289a0" stroke-width="1.3" fill="none"/></svg><span class="n" style="letter-spacing:0.15px">SWAP partition</span><span class="l">SWAP</span><span class="s">9609216</span><span class="z">2.00 GB</span></div>
<div class="row" style="top:704px"><svg class="a" style="left:31px;top:3px;overflow:visible" width="16" height="12" viewBox="0 0 16 12"><path d="M2.5 0.5h11q1.2 0 1.4 1.2l0.6 5.5v3q0 1.3-1.3 1.3h-12.4q-1.3 0-1.3-1.3v-3l0.6-5.5q0.2-1.2 1.4-1.2z" fill="url(#pg)" stroke="#8d95a5" stroke-width="0.9"/><path d="M0.9 7.7h14.2v2.5q0 1-1 1h-12.2q-1 0-1-1z" fill="#dde0e7"/><path d="M0.8 7.3h14.4" stroke="#7f8797" stroke-width="0.9" fill="none"/><path d="M1 8.3h14" stroke="#f7f8fa" stroke-width="0.8" fill="none"/><path d="M5.6 12.5Q3.9 12.5 4 10.9Q4.1 9.5 5.7 9.3Q5.9 7.6 7.7 7.3Q8.9 7.2 9.6 8Q10.4 6 12.4 5.9Q14.7 6 15.1 8.2Q16.4 8.9 16.3 10.4Q16.2 12.4 14.1 12.5Z" fill="#fff" stroke="#c2182e" stroke-width="1"/><path d="M8.6 11.9v-1.2M10.4 11.9v-1.4M12 11.9v-1.2" stroke="#b9bcc4" stroke-width="1" fill="none"/></svg><span class="n" style="letter-spacing:0.2px">Ext2/3/4 partition</span><span class="l">DISKVOLUME1</span><span class="s">13803520</span><span class="z">3.63 TB</span></div>
<div class="a" style="left:399px;top:104px;width:15px;height:637px;background:#edeef1"></div>
<div class="a" style="left:399px;top:243px;width:15px;height:456px;background:#cdcdcd"></div>
<svg class="a" style="left:399px;top:699px" width="15" height="42" viewBox="0 0 15 42"><path d="M4.5 9.2 L7.5 5.8 L10.5 9.2" fill="none" stroke="#5e5e5e" stroke-width="2.2"/><path d="M4.5 32.8 L7.5 36.2 L10.5 32.8" fill="none" stroke="#5e5e5e" stroke-width="2.2"/></svg>
<div class="a" style="left:420px;top:61px;width:1px;height:680px;background:#b8bbd3"></div>
<div class="a" style="left:422px;top:89px;width:1px;height:650px;background:#e9e9ee"></div>
<div class="a" style="left:1199px;top:89px;width:1px;height:650px;background:#f3f3f6"></div>
<div class="a" style="left:421px;top:61px;width:780px;height:27px;background:#f4f4f4"></div>
<div class="a" style="left:422px;top:88px;width:778px;height:1px;background:#c6c6c6"></div>
<div class="a" style="left:435px;top:71px;width:8px;height:8px;border-radius:50%;background:#949494"></div>
<div class="a gs" style="left:451px;top:66px;height:22px;line-height:22px;font-size:11px;color:#5e6676;letter-spacing:-0.1px">Storage properties</div>
<div class="a" style="left:725px;top:61px;width:300px;height:28px;background:#fff;border-left:1px solid #c6c6c6;border-right:1px solid #c6c6c6"></div>
<svg class="a" style="left:735.5px;top:70.2px" width="13" height="10.8" viewBox="0 0 17 13" preserveAspectRatio="none"><path d="M0.4 1.6Q0.4 0.3 1.8 0.3L6.2 0.3Q7.2 0.3 7.6 1.3L15.3 1.3Q16.6 1.3 16.6 2.5L16.6 11.4Q16.6 12.7 15.3 12.7L1.7 12.7Q0.4 12.7 0.4 11.4Z" fill="url(#fg)"/><rect x="6.6" y="2" width="4" height="9" fill="#fff" fill-opacity="0.07"/></svg>
<div class="a gs" style="left:757px;top:66px;height:22px;line-height:22px;font-size:11px;color:#1d4a78;letter-spacing:-0.1px">DISKVOLUME1 (Ext2/3/4 at 13803520 on image...</div>
<svg class="a" style="left:1004px;top:70px" width="12" height="12" viewBox="0 0 12 12"><path d="M1.6 1.6 L10.4 10.4 M10.4 1.6 L1.6 10.4" stroke="#7b8b9e" stroke-width="1.7" fill="none"/></svg>
<svg class="a" style="left:1185px;top:69px" width="12" height="12" viewBox="0 0 12 12"><rect x="1" y="1" width="10" height="2" fill="#8393a6"/><path d="M1.6 5.9 L10.4 5.9 L6 10 Z" fill="#f8f8f8" stroke="#8393a6" stroke-width="1.1"/></svg>
<div class="a" style="left:430.0px;top:97px;width:29px;height:29px"><svg viewBox="0 0 29 29" width="29" height="29" style="display:block"><circle cx="14.5" cy="14.5" r="13.9" fill="#fff" stroke="#2f86a6" stroke-width="1.25"/><circle cx="16.6" cy="11.4" r="4.9" fill="none" stroke="#2a809f" stroke-width="1.4"/><path d="M16.6 6.6v2.7M16.6 13.5v2.7M11.8 11.4h2.7M18.7 11.4h2.7" stroke="#2a809f" stroke-width="0.9" fill="none"/><path d="M13 15.2L8.1 20.6" stroke="#2a809f" stroke-width="2.4" stroke-linecap="round" fill="none"/></svg></div>
<div class="a" style="left:473.0px;top:97px;width:29px;height:29px"><svg viewBox="0 0 29 29" width="29" height="29" style="display:block"><circle cx="14.5" cy="14.5" r="13.9" fill="#eff1f2" stroke="#9cbdcc" stroke-width="1.25"/><rect x="8" y="8" width="13" height="13" fill="#8fb6c8"/><rect x="10.3" y="9.4" width="8.4" height="3" fill="#eff1f2"/><rect x="11.6" y="16.6" width="5.8" height="4.4" fill="#eff1f2"/><rect x="13.6" y="19.3" width="1.8" height="1.7" fill="#8fb6c8"/></svg></div>
<svg class="a" style="left:509.5px;top:108px" width="10" height="8" viewBox="0 0 10 8"><path d="M0.4 1L9.6 1L5 7.1Z" fill="#8fb5c7"/></svg>
<div class="a" style="left:532.0px;top:97px;width:29px;height:29px"><svg viewBox="0 0 29 29" width="29" height="29" style="display:block"><circle cx="14.5" cy="14.5" r="13.9" fill="#eff1f2" stroke="#9cbdcc" stroke-width="1.25"/><path d="M8 8h13v6.4h-8v6.6h-5z" fill="#8fb6c8"/><rect x="10.4" y="9.4" width="8.6" height="3.4" fill="#eff1f2" fill-opacity="0.55"/><rect x="18.6" y="9.4" width="1.4" height="3" fill="#8fb6c8"/><path d="M12 19.6h2.4v1.4h-2.4z" fill="#8fb6c8"/><path d="M23.10 18.04 L22.64 19.16 L21.59 18.91 L21.21 19.29 L21.46 20.34 L20.34 20.80 L19.77 19.89 L19.23 19.89 L18.66 20.80 L17.54 20.34 L17.79 19.29 L17.41 18.91 L16.36 19.16 L15.90 18.04 L16.81 17.47 L16.81 16.93 L15.90 16.36 L16.36 15.24 L17.41 15.49 L17.79 15.11 L17.54 14.06 L18.66 13.60 L19.23 14.51 L19.77 14.51 L20.34 13.60 L21.46 14.06 L21.21 15.11 L21.59 15.49 L22.64 15.24 L23.10 16.36 L22.19 16.93 L22.19 17.47Z M20.80 17.20 A1.3 1.3 0 1 0 18.20 17.20 A1.3 1.3 0 1 0 20.80 17.20Z" fill="#8fb6c8" fill-rule="evenodd"/></svg></div>
<div class="a" style="left:575.0px;top:97px;width:29px;height:29px"><svg viewBox="0 0 29 29" width="29" height="29" style="display:block"><circle cx="14.5" cy="14.5" r="13.9" fill="#eff1f2" stroke="#9cbdcc" stroke-width="1.25"/><path d="M7.4 9.8l1.2 1.4 1.9-3.1" stroke="#8fb6c8" stroke-width="0.9" fill="none"/><path d="M7.4 14.6l1.2 1.4 1.9-3.1" stroke="#8fb6c8" stroke-width="0.9" fill="none"/><rect x="8" y="18.9" width="1.6" height="1.2" fill="#8fb6c8"/><rect x="12.4" y="9.05" width="9.6" height="1.5" fill="#8fb6c8"/><rect x="12.4" y="13.85" width="9.6" height="1.5" fill="#8fb6c8"/><rect x="12.4" y="18.65" width="9.6" height="1.5" fill="#8fb6c8"/></svg></div>
<div class="a" style="left:618.0px;top:97px;width:29px;height:29px"><svg viewBox="0 0 29 29" width="29" height="29" style="display:block"><circle cx="14.5" cy="14.5" r="13.9" fill="#fff" stroke="#2f86a6" stroke-width="1.25"/><rect x="8.1" y="8.1" width="12.9" height="12.8" fill="#2a809f"/><rect x="9.3" y="9.3" width="4.4" height="4.4" fill="#a9cbd9"/><rect x="15.1" y="9.3" width="4.7" height="4.4" fill="#fff"/><rect x="9.3" y="15.3" width="4.4" height="4.4" fill="#fff"/><rect x="15.1" y="15.3" width="4.7" height="4.4" fill="#a9cbd9"/><rect x="10.6" y="10.6" width="1.8" height="1.8" fill="#2a809f"/><rect x="16.6" y="16.6" width="1.8" height="1.8" fill="#2a809f"/></svg></div>
<svg class="a" style="left:654.5px;top:108px" width="10" height="8" viewBox="0 0 10 8"><path d="M0.4 1L9.6 1L5 7.1Z" fill="#2a7f9f"/></svg>
<div class="a" style="left:677.0px;top:97px;width:29px;height:29px"><svg viewBox="0 0 29 29" width="29" height="29" style="display:block"><circle cx="14.5" cy="14.5" r="13.9" fill="#fff" stroke="#2f86a6" stroke-width="1.25"/><rect x="7.4" y="8" width="14.4" height="13" fill="#a9cbd9"/><rect x="7.4" y="8" width="1" height="13" fill="#2a809f"/><rect x="20.8" y="8" width="1" height="13" fill="#2a809f"/><rect x="9" y="8" width="11.2" height="1.8" fill="#2a809f"/><rect x="9" y="19" width="11.2" height="2" fill="#2a809f"/><rect x="9.6" y="11.2" width="10" height="1.6" fill="#fff"/><rect x="9.6" y="14" width="10" height="1.6" fill="#2a809f" fill-opacity="0.0"/><rect x="9.6" y="13.6" width="10" height="0.9" fill="#2a809f"/><rect x="9.6" y="15.4" width="10" height="1.6" fill="#fff"/><rect x="9.6" y="17.6" width="10" height="0.8" fill="#2a809f" fill-opacity="0.5"/></svg></div>
<svg class="a" style="left:713.5px;top:108px" width="10" height="8" viewBox="0 0 10 8"><path d="M0.4 1L9.6 1L5 7.1Z" fill="#2a7f9f"/></svg>
<div class="a" style="left:736.0px;top:97px;width:29px;height:29px"><svg viewBox="0 0 29 29" width="29" height="29" style="display:block"><circle cx="14.5" cy="14.5" r="13.9" fill="#fff" stroke="#2f86a6" stroke-width="1.25"/><rect x="10" y="7.1" width="3" height="1.8" fill="#2a809f"/><rect x="16" y="7.1" width="3" height="1.8" fill="#2a809f"/><path d="M8.7 9.6h4.6v6.4l-1.3 1.2v4.7h-5v-5.2z" fill="#2a809f"/><path d="M20.3 9.6h-4.6v6.4l1.3 1.2v4.7h5v-5.2z" fill="#2a809f"/><rect x="14" y="10" width="1" height="4.6" fill="#2a809f"/></svg></div>
<div class="a" style="left:779.0px;top:97px;width:29px;height:29px"><svg viewBox="0 0 29 29" width="29" height="29" style="display:block"><circle cx="14.5" cy="14.5" r="13.9" fill="#fff" stroke="#2f86a6" stroke-width="1.25"/><text x="14.45" y="19" text-anchor="middle" font-family="'Liberation Sans','DejaVu Sans',sans-serif" font-weight="bold" font-size="10.8" textLength="17.3" lengthAdjust="spacingAndGlyphs" fill="#2a809f" stroke="#2a809f" stroke-width="0.4">A&#223;</text><rect x="8.2" y="7.9" width="3.6" height="1.1" fill="#2a809f"/></svg></div>
<div class="a" style="left:822.0px;top:97px;width:29px;height:29px"><svg viewBox="0 0 29 29" width="29" height="29" style="display:block"><circle cx="14.5" cy="14.5" r="13.9" fill="#eff1f2" stroke="#9cbdcc" stroke-width="1.25"/><rect x="6.6" y="10" width="16.8" height="1.3" fill="#8fb6c8"/><rect x="7.1" y="13.6" width="6.6" height="5.8" fill="#eff1f2" stroke="#8fb6c8" stroke-width="0.9"/><path d="M7.6 18.9l2.2-2.3 1.3 1.2 1-0.8 1.3 1.9z" fill="#8fb6c8"/><rect x="15.8" y="14.3" width="6.6" height="1.3" fill="#8fb6c8"/><rect x="15.8" y="17.5" width="6.6" height="1.3" fill="#8fb6c8"/></svg></div>
<svg class="a" style="left:858.5px;top:108px" width="10" height="8" viewBox="0 0 10 8"><path d="M0.4 1L9.6 1L5 7.1Z" fill="#8fb5c7"/></svg>
<div class="a" style="left:881.0px;top:97px;width:29px;height:29px"><svg viewBox="0 0 29 29" width="29" height="29" style="display:block"><circle cx="14.5" cy="14.5" r="13.9" fill="#eff1f2" stroke="#9cbdcc" stroke-width="1.25"/><path d="M9.4 7.4H17.8L22.1 11.8V21.8H9.4Z" fill="none" stroke="#8fb6c8" stroke-width="1"/><path d="M17.8 7.4V11.8H22.1" fill="none" stroke="#8fb6c8" stroke-width="1"/><path d="M18.3 8.6v2.7h2.7z" fill="#8fb6c8" fill-opacity="0.55"/><path d="M7.5 6.9V12.3H12.6" fill="none" stroke="#8fb6c8" stroke-width="1.5"/><path d="M12 9.5l3.2 2.8-3.2 2.8z" fill="#8fb6c8"/><path d="M10.9 7.4v2.4" stroke="#8fb6c8" stroke-width="0.9" stroke-opacity="0.7" fill="none"/><circle cx="18.7" cy="18.7" r="4.6" fill="#eff1f2"/><path d="M22.50 19.58 L22.01 20.76 L20.87 20.47 L20.47 20.87 L20.76 22.01 L19.58 22.50 L18.98 21.49 L18.42 21.49 L17.82 22.50 L16.64 22.01 L16.93 20.87 L16.53 20.47 L15.39 20.76 L14.90 19.58 L15.91 18.98 L15.91 18.42 L14.90 17.82 L15.39 16.64 L16.53 16.93 L16.93 16.53 L16.64 15.39 L17.82 14.90 L18.42 15.91 L18.98 15.91 L19.58 14.90 L20.76 15.39 L20.47 16.53 L20.87 16.93 L22.01 16.64 L22.50 17.82 L21.49 18.42 L21.49 18.98Z M20.20 18.70 A1.5 1.5 0 1 0 17.20 18.70 A1.5 1.5 0 1 0 20.20 18.70Z" fill="#8fb6c8" fill-rule="evenodd"/><circle cx="18.7" cy="18.7" r="0.6" fill="#8fb6c8"/></svg></div>
<div class="a" style="left:924.0px;top:97px;width:29px;height:29px"><svg viewBox="0 0 29 29" width="29" height="29" style="display:block"><circle cx="14.5" cy="14.5" r="13.9" fill="#eff1f2" stroke="#9cbdcc" stroke-width="1.25"/><path d="M9.4 7.4H17.8L22.1 11.8V21.8H9.4Z" fill="none" stroke="#8fb6c8" stroke-width="1"/><path d="M17.8 7.4V11.8H22.1" fill="none" stroke="#8fb6c8" stroke-width="1"/><path d="M18.3 8.6v2.7h2.7z" fill="#8fb6c8" fill-opacity="0.55"/><path d="M7.5 6.9V12.3H12.6" fill="none" stroke="#8fb6c8" stroke-width="1.5"/><path d="M12 9.5l3.2 2.8-3.2 2.8z" fill="#8fb6c8"/><path d="M10.9 7.4v2.4" stroke="#8fb6c8" stroke-width="0.9" stroke-opacity="0.7" fill="none"/></svg></div>
<div class="a" style="left:967.0px;top:97px;width:29px;height:29px"><svg viewBox="0 0 29 29" width="29" height="29" style="display:block"><circle cx="14.5" cy="14.5" r="13.9" fill="#eff1f2" stroke="#9cbdcc" stroke-width="1.25"/><text x="14.45" y="18" text-anchor="middle" font-family="'Liberation Sans','DejaVu Sans',sans-serif" font-weight="bold" font-size="9.8" textLength="20.6" lengthAdjust="spacingAndGlyphs" fill="#8fb6c8" stroke="#8fb6c8" stroke-width="0.5">HEX</text></svg></div>
<div class="a" style="left:1010.0px;top:97px;width:29px;height:29px"><svg viewBox="0 0 29 29" width="29" height="29" style="display:block"><circle cx="14.5" cy="14.5" r="13.9" fill="#eff1f2" stroke="#9cbdcc" stroke-width="1.25"/><path d="M9.2 15.4v-8h8.2l3.8 3.8v4.2" fill="none" stroke="#8fb6c8" stroke-width="1"/><path d="M17 7.2l4.4 4.4h-4.4z" fill="#8fb6c8"/><rect x="7.3" y="15.9" width="13.2" height="2.6" fill="#eff1f2" stroke="#8fb6c8" stroke-width="1"/><rect x="9.7" y="19.3" width="12.6" height="2.4" fill="#eff1f2" stroke="#8fb6c8" stroke-width="1"/></svg></div>
<div class="a" style="left:1053.0px;top:97px;width:29px;height:29px"><svg viewBox="0 0 29 29" width="29" height="29" style="display:block"><circle cx="14.5" cy="14.5" r="13.9" fill="#eff1f2" stroke="#9cbdcc" stroke-width="1.25"/><path d="M13.6 21.6h-5.6q-0.8 0-0.8-0.8v-6.6q0-1 1-1.2" fill="none" stroke="#8fb6c8" stroke-width="0.9" stroke-opacity="0.75"/><path d="M13.6 21.6l0.6-2" fill="none" stroke="#8fb6c8" stroke-width="0.9" stroke-opacity="0.6"/><rect x="11.6" y="11.6" width="11" height="5" rx="0.8" fill="#eff1f2" stroke="#8fb6c8" stroke-width="1"/><path d="M17 12.2h5" stroke="#8fb6c8" stroke-width="1.2" fill="none"/><rect x="12.9" y="13.7" width="1.2" height="1.2" fill="#8fb6c8"/><path d="M8.2 10.4Q9.2 9.2 10.8 9.1" stroke="#8fb6c8" stroke-width="0.9" stroke-opacity="0.7" fill="none"/><path d="M10.4 7.4l3 1.7-3 1.8z" fill="#8fb6c8"/></svg></div>
<div class="a" style="left:1096.0px;top:97px;width:29px;height:29px"><svg viewBox="0 0 29 29" width="29" height="29" style="display:block"><circle cx="14.5" cy="14.5" r="13.9" fill="#eff1f2" stroke="#9cbdcc" stroke-width="1.25"/><text x="12.4" y="19.9" text-anchor="middle" font-family="'Liberation Sans','DejaVu Sans',sans-serif" font-weight="bold" font-size="15" textLength="10.6" lengthAdjust="spacingAndGlyphs" fill="#8fb6c8" stroke="#8fb6c8" stroke-width="0.55">#</text><rect x="17.4" y="19.4" width="4.8" height="1.3" fill="#8fb6c8"/></svg></div>
<div class="a" style="left:423px;top:133px;width:616px;height:22px;border:1px solid #c3c3c3;background:#fff"></div>
<svg class="a" style="left:429px;top:137px" width="17" height="13" viewBox="0 0 17 13" preserveAspectRatio="none"><path d="M0.4 1.6Q0.4 0.3 1.8 0.3L6.2 0.3Q7.2 0.3 7.6 1.3L15.3 1.3Q16.6 1.3 16.6 2.5L16.6 11.4Q16.6 12.7 15.3 12.7L1.7 12.7Q0.4 12.7 0.4 11.4Z" fill="url(#fg)"/><rect x="6.6" y="2" width="4" height="9" fill="#fff" fill-opacity="0.07"/></svg>
<div class="a" style="left:457px;top:141px;width:6px;height:6px;border-radius:50%;background:#66b266"></div>
<div class="a" style="left:469px;top:134px;height:22px;line-height:22px;font-size:11px;color:#000">$</div>
<div class="a" style="left:1046px;top:133px;width:151px;height:22px;border:1px solid #c3c3c3;background:#fff"></div>
<div class="a" style="left:1173px;top:134px;width:1px;height:20px;background:#c3c3c3"></div>
<div class="a" style="left:1049px;top:134px;height:22px;line-height:22px;font-size:11px;font-style:italic;color:#b2b2b2;letter-spacing:-0.1px">Quick find...</div>
<svg class="a" style="left:1177px;top:136px" width="16" height="16" viewBox="0 0 16 16"><circle cx="6.1" cy="6" r="4.2" fill="none" stroke="#5596dc" stroke-width="1.2"/><path d="M9.2 9.3 L13.6 13.7" stroke="#2f7bd0" stroke-width="1.9"/></svg>
<div class="a" style="left:438px;top:161px;width:203px;height:20px;background:#e9e9e9"></div>
<div class="a" style="left:427px;top:167px;width:9px;height:9px;border:1px solid #969696;background:#fff;border-radius:1px"></div>
<div class="a" style="left:429px;top:171px;width:5px;height:1px;background:#3c4cc0"></div>
<svg class="a" style="left:441px;top:163px" width="16" height="16" viewBox="0 0 16 16"><circle cx="8" cy="8" r="7" fill="#fff" stroke="#148c14" stroke-width="1.5"/><path d="M8.3 8.3L8.3 1A7 7 0 0 0 1.4 5.6Z" fill="#148c14"/><path d="M8 8L8.6 1.2" stroke="#148c14" stroke-width="0.8" opacity="0"/></svg>
<div class="a" style="left:461px;top:161px;height:22px;line-height:22px;font-size:11px;color:#000;letter-spacing:-0.12px">DISKVOLUME1 (Ext2/3/4 file system)</div>
<svg class="dot" style="top:187px" viewBox="0 0 8 11"><rect x="0" y="1" width="1" height="1" fill="#d4d4d8"/><rect x="0" y="3" width="1" height="1" fill="#b0b0b0"/><rect x="0" y="5" width="1" height="1" fill="#8c8c8c"/><rect x="0" y="7" width="1" height="1" fill="#b0b0b0"/><rect x="0" y="9" width="1" height="1" fill="#d0d4e4"/><rect x="2" y="5" width="1" height="1" fill="#a0a0a0"/><rect x="4" y="5" width="1" height="1" fill="#a8a8a8"/><rect x="6" y="5" width="1" height="1" fill="#c4c4c4"/></svg>
<svg class="a" style="left:457px;top:185.2px" width="16" height="12.8" viewBox="0 0 17 13" preserveAspectRatio="none"><path d="M0.4 1.6Q0.4 0.3 1.8 0.3L6.2 0.3Q7.2 0.3 7.6 1.3L15.3 1.3Q16.6 1.3 16.6 2.5L16.6 11.4Q16.6 12.7 15.3 12.7L1.7 12.7Q0.4 12.7 0.4 11.4Z" fill="url(#fg)"/><rect x="6.6" y="2" width="4" height="9" fill="#fff" fill-opacity="0.07"/></svg>
<div class="tr" style="top:181.6px">backups</div>
<div class="fl" style="left:849px;top:184px">23.02.2021 19:54:56</div>
<div class="fl" style="left:971px;top:184px;letter-spacing:-0.15px">File folder</div>
<svg class="dot" style="top:209px" viewBox="0 0 8 11"><rect x="0" y="1" width="1" height="1" fill="#d4d4d8"/><rect x="0" y="3" width="1" height="1" fill="#b0b0b0"/><rect x="0" y="5" width="1" height="1" fill="#8c8c8c"/><rect x="0" y="7" width="1" height="1" fill="#b0b0b0"/><rect x="0" y="9" width="1" height="1" fill="#d0d4e4"/><rect x="2" y="5" width="1" height="1" fill="#a0a0a0"/><rect x="4" y="5" width="1" height="1" fill="#a8a8a8"/><rect x="6" y="5" width="1" height="1" fill="#c4c4c4"/></svg>
<svg class="a" style="left:457px;top:207.2px" width="16" height="12.8" viewBox="0 0 17 13" preserveAspectRatio="none"><path d="M0.4 1.6Q0.4 0.3 1.8 0.3L6.2 0.3Q7.2 0.3 7.6 1.3L15.3 1.3Q16.6 1.3 16.6 2.5L16.6 11.4Q16.6 12.7 15.3 12.7L1.7 12.7Q0.4 12.7 0.4 11.4Z" fill="url(#fg)"/><rect x="6.6" y="2" width="4" height="9" fill="#fff" fill-opacity="0.07"/></svg>
<div class="tr" style="top:203.6px">data</div>
<div class="fl" style="left:849px;top:206px">23.02.2021 19:55:23</div>
<div class="fl" style="left:971px;top:206px;letter-spacing:-0.15px">File folder</div>
<svg class="dot" style="top:231px" viewBox="0 0 8 11"><rect x="0" y="1" width="1" height="1" fill="#d4d4d8"/><rect x="0" y="3" width="1" height="1" fill="#b0b0b0"/><rect x="0" y="5" width="1" height="1" fill="#8c8c8c"/><rect x="0" y="7" width="1" height="1" fill="#b0b0b0"/><rect x="0" y="9" width="1" height="1" fill="#d0d4e4"/><rect x="2" y="5" width="1" height="1" fill="#a0a0a0"/><rect x="4" y="5" width="1" height="1" fill="#a8a8a8"/><rect x="6" y="5" width="1" height="1" fill="#c4c4c4"/></svg>
<svg class="a" style="left:457px;top:229.2px" width="16" height="12.8" viewBox="0 0 17 13" preserveAspectRatio="none"><path d="M0.4 1.6Q0.4 0.3 1.8 0.3L6.2 0.3Q7.2 0.3 7.6 1.3L15.3 1.3Q16.6 1.3 16.6 2.5L16.6 11.4Q16.6 12.7 15.3 12.7L1.7 12.7Q0.4 12.7 0.4 11.4Z" fill="url(#fg)"/><rect x="6.6" y="2" width="4" height="9" fill="#fff" fill-opacity="0.07"/></svg>
<div class="tr" style="top:225.6px">debug_logs</div>
<div class="fl" style="left:849px;top:228px">23.02.2021 20:00:02</div>
<div class="fl" style="left:971px;top:228px;letter-spacing:-0.15px">File folder</div>
<svg class="dot" style="top:253px" viewBox="0 0 8 11"><rect x="0" y="1" width="1" height="1" fill="#d4d4d8"/><rect x="0" y="3" width="1" height="1" fill="#b0b0b0"/><rect x="0" y="5" width="1" height="1" fill="#8c8c8c"/><rect x="0" y="7" width="1" height="1" fill="#b0b0b0"/><rect x="0" y="9" width="1" height="1" fill="#d0d4e4"/><rect x="2" y="5" width="1" height="1" fill="#a0a0a0"/><rect x="4" y="5" width="1" height="1" fill="#a8a8a8"/><rect x="6" y="5" width="1" height="1" fill="#c4c4c4"/></svg>
<svg class="a" style="left:457px;top:251.2px" width="16" height="12.8" viewBox="0 0 17 13" preserveAspectRatio="none"><path d="M0.4 1.6Q0.4 0.3 1.8 0.3L6.2 0.3Q7.2 0.3 7.6 1.3L15.3 1.3Q16.6 1.3 16.6 2.5L16.6 11.4Q16.6 12.7 15.3 12.7L1.7 12.7Q0.4 12.7 0.4 11.4Z" fill="url(#fg)"/><rect x="6.6" y="2" width="4" height="9" fill="#fff" fill-opacity="0.07"/></svg>
<div class="tr" style="top:247.6px">kars</div>
<div class="fl" style="left:849px;top:250px">23.02.2021 19:54:28</div>
<div class="fl" style="left:971px;top:250px;letter-spacing:-0.15px">File folder</div>
<svg class="dot" style="top:275px" viewBox="0 0 8 11"><rect x="0" y="1" width="1" height="1" fill="#d4d4d8"/><rect x="0" y="3" width="1" height="1" fill="#b0b0b0"/><rect x="0" y="5" width="1" height="1" fill="#8c8c8c"/><rect x="0" y="7" width="1" height="1" fill="#b0b0b0"/><rect x="0" y="9" width="1" height="1" fill="#d0d4e4"/><rect x="2" y="5" width="1" height="1" fill="#a0a0a0"/><rect x="4" y="5" width="1" height="1" fill="#a8a8a8"/><rect x="6" y="5" width="1" height="1" fill="#c4c4c4"/></svg>
<svg class="a" style="left:457px;top:273.2px" width="16" height="12.8" viewBox="0 0 17 13" preserveAspectRatio="none"><path d="M0.4 1.6Q0.4 0.3 1.8 0.3L6.2 0.3Q7.2 0.3 7.6 1.3L15.3 1.3Q16.6 1.3 16.6 2.5L16.6 11.4Q16.6 12.7 15.3 12.7L1.7 12.7Q0.4 12.7 0.4 11.4Z" fill="url(#fg)"/><rect x="6.6" y="2" width="4" height="9" fill="#fff" fill-opacity="0.07"/></svg>
<div class="tr" style="top:269.6px">logs</div>
<div class="fl" style="left:849px;top:272px">23.02.2021 19:55:01</div>
<div class="fl" style="left:971px;top:272px;letter-spacing:-0.15px">File folder</div>
<svg class="dot" style="top:297px" viewBox="0 0 8 11"><rect x="0" y="1" width="1" height="1" fill="#d4d4d8"/><rect x="0" y="3" width="1" height="1" fill="#b0b0b0"/><rect x="0" y="5" width="1" height="1" fill="#8c8c8c"/><rect x="0" y="7" width="1" height="1" fill="#b0b0b0"/><rect x="0" y="9" width="1" height="1" fill="#d0d4e4"/><rect x="2" y="5" width="1" height="1" fill="#a0a0a0"/><rect x="4" y="5" width="1" height="1" fill="#a8a8a8"/><rect x="6" y="5" width="1" height="1" fill="#c4c4c4"/></svg>
<svg class="a" style="left:457px;top:295.2px" width="16" height="12.8" viewBox="0 0 17 13" preserveAspectRatio="none"><path d="M0.4 1.6Q0.4 0.3 1.8 0.3L6.2 0.3Q7.2 0.3 7.6 1.3L15.3 1.3Q16.6 1.3 16.6 2.5L16.6 11.4Q16.6 12.7 15.3 12.7L1.7 12.7Q0.4 12.7 0.4 11.4Z" fill="url(#fg)"/><rect x="6.6" y="2" width="4" height="9" fill="#fff" fill-opacity="0.07"/></svg>
<div class="tr" style="top:291.6px">restsdk-info</div>
<div class="fl" style="left:849px;top:294px">23.02.2021 19:55:11</div>
<div class="fl" style="left:971px;top:294px;letter-spacing:-0.15px">File folder</div>
<svg class="dot" style="top:319px" viewBox="0 0 8 11"><rect x="0" y="1" width="1" height="1" fill="#d4d4d8"/><rect x="0" y="3" width="1" height="1" fill="#b0b0b0"/><rect x="0" y="5" width="1" height="1" fill="#8c8c8c"/><rect x="0" y="7" width="1" height="1" fill="#b0b0b0"/><rect x="0" y="9" width="1" height="1" fill="#d0d4e4"/><rect x="2" y="5" width="1" height="1" fill="#a0a0a0"/><rect x="4" y="5" width="1" height="1" fill="#a8a8a8"/><rect x="6" y="5" width="1" height="1" fill="#c4c4c4"/></svg>
<svg class="a" style="left:457px;top:317.2px" width="16" height="12.8" viewBox="0 0 17 13" preserveAspectRatio="none"><path d="M0.4 1.6Q0.4 0.3 1.8 0.3L6.2 0.3Q7.2 0.3 7.6 1.3L15.3 1.3Q16.6 1.3 16.6 2.5L16.6 11.4Q16.6 12.7 15.3 12.7L1.7 12.7Q0.4 12.7 0.4 11.4Z" fill="url(#fg)"/><rect x="6.6" y="2" width="4" height="9" fill="#fff" fill-opacity="0.07"/></svg>
<div class="tr" style="top:313.6px">restsdk</div>
<div class="fl" style="left:849px;top:316px">23.02.2021 19:55:03</div>
<div class="fl" style="left:971px;top:316px;letter-spacing:-0.15px">File folder</div>
<svg class="dot" style="top:341px" viewBox="0 0 8 11"><rect x="0" y="1" width="1" height="1" fill="#d4d4d8"/><rect x="0" y="3" width="1" height="1" fill="#b0b0b0"/><rect x="0" y="5" width="1" height="1" fill="#8c8c8c"/><rect x="0" y="7" width="1" height="1" fill="#b0b0b0"/><rect x="0" y="9" width="1" height="1" fill="#d0d4e4"/><rect x="2" y="5" width="1" height="1" fill="#a0a0a0"/><rect x="4" y="5" width="1" height="1" fill="#a8a8a8"/><rect x="6" y="5" width="1" height="1" fill="#c4c4c4"/></svg>
<svg class="a" style="left:457px;top:339.2px" width="16" height="12.8" viewBox="0 0 17 13" preserveAspectRatio="none"><path d="M0.4 1.6Q0.4 0.3 1.8 0.3L6.2 0.3Q7.2 0.3 7.6 1.3L15.3 1.3Q16.6 1.3 16.6 2.5L16.6 11.4Q16.6 12.7 15.3 12.7L1.7 12.7Q0.4 12.7 0.4 11.4Z" fill="url(#fg)"/><rect x="6.6" y="2" width="4" height="9" fill="#fff" fill-opacity="0.07"/></svg>
<div class="tr" style="top:335.6px">samba</div>
<div class="fl" style="left:849px;top:338px">23.02.2021 19:58:37</div>
<div class="fl" style="left:971px;top:338px;letter-spacing:-0.15px">File folder</div>
<svg class="dot" style="top:363px" viewBox="0 0 8 11"><rect x="0" y="1" width="1" height="1" fill="#d4d4d8"/><rect x="0" y="3" width="1" height="1" fill="#b0b0b0"/><rect x="0" y="5" width="1" height="1" fill="#8c8c8c"/><rect x="0" y="7" width="1" height="1" fill="#b0b0b0"/><rect x="0" y="9" width="1" height="1" fill="#d0d4e4"/><rect x="2" y="5" width="1" height="1" fill="#a0a0a0"/><rect x="4" y="5" width="1" height="1" fill="#a8a8a8"/><rect x="6" y="5" width="1" height="1" fill="#c4c4c4"/></svg>
<svg class="a" style="left:457px;top:361.2px" width="16" height="12.8" viewBox="0 0 17 13" preserveAspectRatio="none"><path d="M0.4 1.6Q0.4 0.3 1.8 0.3L6.2 0.3Q7.2 0.3 7.6 1.3L15.3 1.3Q16.6 1.3 16.6 2.5L16.6 11.4Q16.6 12.7 15.3 12.7L1.7 12.7Q0.4 12.7 0.4 11.4Z" fill="url(#fg)"/><rect x="6.6" y="2" width="4" height="9" fill="#fff" fill-opacity="0.07"/></svg>
<div class="tr" style="top:357.6px">uploadedLogs</div>
<div class="fl" style="left:849px;top:360px">23.02.2021 20:15:02</div>
<div class="fl" style="left:971px;top:360px;letter-spacing:-0.15px">File folder</div>
<div class="a" style="left:679px;top:160px;width:1px;height:555px;background:#dedee2"></div>
<div class="a" style="left:843px;top:161px;width:1px;height:22px;background:#e2e2e2"></div>
<div class="a" style="left:966px;top:161px;width:1px;height:22px;background:#e2e2e2"></div>
<div class="a" style="left:1029px;top:161px;width:1px;height:22px;background:#e2e2e2"></div>
<div class="a" style="left:1112px;top:161px;width:1px;height:22px;background:#e2e2e2"></div>
<div class="fl" style="left:687px;top:162px;letter-spacing:-0.35px">Name</div>
<div class="fl" style="left:850px;top:162px">Date</div>
<div class="fl" style="left:973px;top:162px">Type</div>
<div class="fl" style="left:1075px;top:162px;width:30px;text-align:right">Size</div>
<div class="a" style="left:423px;top:715px;width:776px;height:1px;background:#e2e2e6"></div>
<div class="a" style="left:423px;top:738px;width:776px;height:1px;background:#c6c8dc"></div>
<div class="a" style="left:426px;top:723px;width:8px;height:8px;border-radius:50%;background:#30c878"></div>
<div class="a" style="left:438px;top:717px;height:22px;line-height:22px;font-size:11px;color:#000;letter-spacing:-0.1px">9 objects in directory.</div>
<div class="a" style="left:543px;top:172px;width:232px;height:374px;background:#fff;border:1px solid #b9b9b9;box-shadow:2px 2px 2px rgba(0,0,0,0.45)">
<div class="sep" style="top:64px"></div>
<div class="sep" style="top:109px"></div>
<div class="sep" style="top:154px"></div>
<div class="sep" style="top:328px"></div>
<div class="a" style="left:-1px;top:220px;width:232px;height:25px;background:#d9e3ed;border:2px solid #e9b148"></div>
<div class="m" style="top:1px;letter-spacing:-0.2px">Save all selection</div>
<div class="m" style="top:22px">Save selection (advanced)</div>
<div class="m" style="top:43px">Create batch copying task</div>
<div class="m" style="top:67px">Find files and folders</div>
<div class="m" style="top:88px">Open in hexadecimal viewer</div>
<div class="m" style="top:112px;letter-spacing:0.12px">Report of files/folders...</div>
<div class="m" style="top:133px">Check and re-assign file extensions</div>
<div class="m" style="top:157px">Go to on-disk data start</div>
<div class="m" style="top:178px">Show on-disk fragments</div>
<div class="m" style="top:199px">Go to on-disk object descriptor</div>
<div class="m" style="top:223px">Transform file system files</div>
<div class="m" style="top:244px">Calculate the size of data in subfolders</div>
<div class="m" style="top:265px">Enable indication of used clusters</div>
<div class="m" style="top:286px">Convert used space information to mask</div>
<div class="m" style="top:307px">Save image of used space</div>
<div class="m" style="top:331px">Show extended attributes</div>
<div class="m" style="top:352px">Show properties</div>
</div>
</body></html>
